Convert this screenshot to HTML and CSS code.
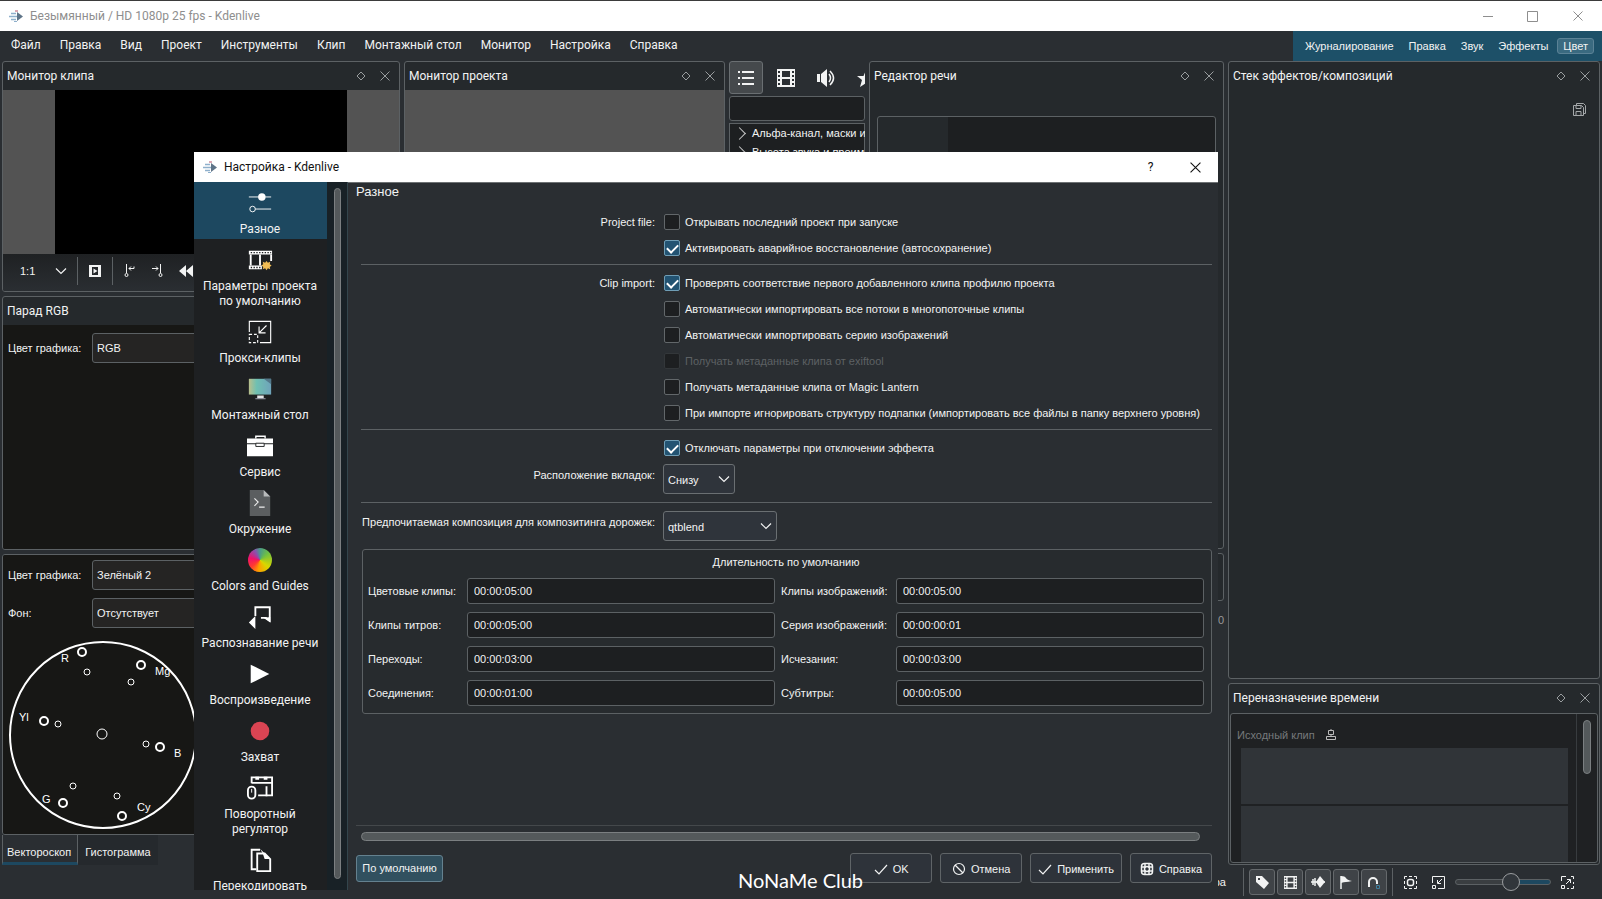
FILE: index.html
```html
<!DOCTYPE html>
<html lang="ru">
<head>
<meta charset="UTF-8">
<title>Безымянный / HD 1080p 25 fps - Kdenlive</title>
<meta name="viewport" content="width=device-width, initial-scale=1">
<link rel="stylesheet" href="styles.css">
</head>
<body>
<!-- shared icons -->
<svg class="defs" width="0" height="0">
  <symbol id="logo" viewBox="0 0 16 16"><path d="M9 4v9l6-4.500z" fill="#5f7488"/><path d="M3 5.500h5M1 8.500h8M3 11.500h5" stroke="#8fb0cc" stroke-width="1.5"/><path d="M7 2h3v2H7z" fill="#dba9b4"/><path d="M6 13h3v1H6z" fill="#8fb0cc"/></symbol>
  <symbol id="float" viewBox="0 0 10 10"><path d="M5 1l4 4-4 4-4-4z" fill="none" stroke="currentColor"/></symbol>
  <symbol id="x" viewBox="0 0 10 10"><path d="M.5.5l9 9M9.5.5l-9 9" fill="none" stroke="currentColor"/></symbol>
  <symbol id="chev" viewBox="0 0 12 8"><path d="M1 1.5l5 5 5-5" fill="none" stroke="currentColor" stroke-width="1.2"/></symbol>
  <symbol id="tick" viewBox="0 0 14 14"><path d="M1 8l4 4 8-9" fill="none" stroke="currentColor" stroke-width="1.2"/></symbol>
  <symbol id="film" viewBox="0 0 18 18"><path fill="currentColor" fill-rule="evenodd" d="M0 0h18v18H0zM5 2v6h8V2zM5 10v6h8v-6zM1 2h2v2H1zM1 6h2v2H1zM1 10h2v2H1zM1 14h2v2H1zM15 2h2v2h-2zM15 6h2v2h-2zM15 10h2v2h-2zM15 14h2v2h-2z"/></symbol>
</svg>

<div class="titlebar">
  <svg class="logo"><use href="#logo"/></svg>
  <span>Безымянный / HD 1080p 25 fps - Kdenlive</span>
  <div class="winbtns">
    <button aria-label="Свернуть"><svg width="10" height="10"><path d="M0 5.5h10" stroke="currentColor"/></svg></button>
    <button aria-label="Развернуть"><svg width="11" height="11"><path d="M.5.5h10v10H.5z" fill="none" stroke="currentColor"/></svg></button>
    <button aria-label="Закрыть"><svg width="10" height="10"><use href="#x"/></svg></button>
  </div>
</div>

<div class="menubar">
  <nav class="menu">
    <button>Файл</button><button>Правка</button><button>Вид</button><button>Проект</button><button>Инструменты</button><button>Клип</button><button>Монтажный стол</button><button>Монитор</button><button>Настройка</button><button>Справка</button>
  </nav>
  <div class="layouts">
    <button>Журналирование</button><button>Правка</button><button>Звук</button><button>Эффекты</button><button class="on">Цвет</button>
  </div>
</div>

<main class="workspace">
  <div class="col">
    <section class="panel clip-monitor">
      <div class="head"><h2>Монитор клипа</h2><svg><use href="#float"/></svg><svg><use href="#x"/></svg></div>
      <div class="video"><div class="frame"></div></div>
      <div class="monitor-tools">
        <span class="zoom">1:1</span>
        <svg class="arrow" width="12" height="8"><use href="#chev"/></svg>
        <i class="vsep"></i>
        <svg width="14" height="14" viewBox="0 0 14 14"><path fill="currentColor" fill-rule="evenodd" d="M1 1h12v12H1zM4 3v8h6V3z"/><path d="M5.500 4.500v5l4-2.500z" fill="currentColor"/></svg>
        <i class="vsep"></i>
        <svg width="14" height="14" viewBox="0 0 14 14" fill="none" stroke="currentColor"><path d="M3.500 0v9M6 4.500h5v-2M8 2.500l-2 2 2 2"/><circle cx="3.500" cy="11" r="1.500"/></svg>
        <svg class="gap" width="14" height="14" viewBox="0 0 14 14" fill="none" stroke="currentColor"><path d="M9.500 0v9M1 4.500h6M5 2.500l2 2-2 2"/><circle cx="9.500" cy="11" r="1.500"/></svg>
        <svg class="gap" width="14" height="14" viewBox="0 0 14 14"><path d="M7 1v12L0 7zM14 1v12L7 7z" fill="currentColor"/></svg>
      </div>
    </section>
    <section class="panel parade">
      <div class="head"><h2>Парад RGB</h2></div>
      <div class="scope">
        <div class="scope-row"><label for="paradeColor">Цвет графика:</label><select id="paradeColor"><option>RGB</option></select></div>
      </div>
    </section>
    <section class="panel vector">
      <div class="scope">
        <div class="scope-row"><label for="vecColor">Цвет графика:</label><select id="vecColor"><option>Зелёный 2</option></select></div>
        <div class="scope-row"><label for="vecBg">Фон:</label><select id="vecBg"><option>Отсутствует</option></select></div>
        <svg class="vectorscope" width="200" height="200" viewBox="0 0 200 200">
          <circle cx="100" cy="101" r="93" stroke-width="2"/>
          <circle cx="99" cy="100" r="5"/>
          <g stroke-width="2"><circle cx="79" cy="18" r="4"/><circle cx="138" cy="31" r="4"/><circle cx="41" cy="87" r="4"/><circle cx="157" cy="113" r="4"/><circle cx="60" cy="169" r="4"/><circle cx="119" cy="182" r="4"/></g>
          <g><circle cx="84" cy="38" r="3"/><circle cx="128" cy="48" r="3"/><circle cx="55" cy="90" r="3"/><circle cx="143" cy="110" r="3"/><circle cx="70" cy="152" r="3"/><circle cx="114" cy="162" r="3"/></g>
          <text x="58" y="28">R</text><text x="152" y="41">Mg</text><text x="16" y="87">Yl</text><text x="171" y="123">B</text><text x="39" y="169">G</text><text x="134" y="177">Cy</text>
        </svg>
      </div>
    </section>
    <div class="tabs"><button class="on">Вектороскоп</button><button>Гистограмма</button></div>
  </div>

  <div class="col">
    <section class="panel project-monitor">
      <div class="head"><h2>Монитор проекта</h2><svg><use href="#float"/></svg><svg><use href="#x"/></svg></div>
      <div class="video"></div>
    </section>
  </div>

  <div class="col effects">
    <div class="kinds">
      <button class="on" aria-label="Все"><svg width="18" height="18" viewBox="0 0 18 18"><path d="M5 3h12M5 9h12M5 15h12M1 3h2M1 9h2M1 15h2" stroke="currentColor" stroke-width="2"/></svg></button>
      <button aria-label="Видео"><svg width="18" height="18"><use href="#film"/></svg></button>
      <button aria-label="Звук"><svg width="18" height="18" viewBox="0 0 18 18"><path d="M0 5h3v8H0zM4 5l6-5v18l-6-5z" fill="currentColor"/><path d="M12 5q3 4 0 8M13 2q7 7 0 14" fill="none" stroke="currentColor" stroke-width="1.500"/></svg></button>
      <button aria-label="Избранное"><svg width="18" height="18" viewBox="0 0 18 18"><path d="M9 1l2.500 6H18l-5 4 2 7-6-4-6 4 2-7-5-4h6.500z" fill="currentColor"/></svg></button>
    </div>
    <input class="search" type="text" aria-label="Поиск">
    <ul class="tree"><li>Альфа-канал, маски и</li><li>Высота звука и преим</li></ul>
  </div>

  <div class="col">
    <section class="panel speech">
      <div class="head"><h2>Редактор речи</h2><svg><use href="#float"/></svg><svg><use href="#x"/></svg></div>
      <div class="speech-text"></div>
    </section>
    <section class="panel mixer"></section>
    <span class="db">0</span>
  </div>

  <div class="col">
    <section class="panel stack">
      <div class="head"><h2>Стек эффектов/композиций</h2><svg><use href="#float"/></svg><svg><use href="#x"/></svg></div>
      <svg class="save" width="13" height="13" viewBox="0 0 13 13" fill="none" stroke="currentColor"><path d="M3.500 2.500v-2h7l2 2v8h-2M.500 2.500h8l2 2v8H.500zM3 2.500v3h5v-3M3 12.500v-4h5v4"/></svg>
    </section>
    <section class="panel remap">
      <div class="head"><h2>Переназначение времени</h2><svg><use href="#float"/></svg><svg><use href="#x"/></svg></div>
      <div class="remap-box">
        <div class="remap-main">
          <div class="remap-label">Исходный клип <svg width="12" height="12" viewBox="0 0 12 12" fill="none" stroke="currentColor"><path d="M3.500 1.500h5v4h-5zM1.500 7.500h9v3h-9zM6 5v3M6 0v1"/></svg></div>
          <div class="block"></div><div class="block"></div>
        </div>
        <div class="vscroll"><div class="thumb"></div></div>
      </div>
    </section>
  </div>
</main>

<footer class="statusbar">
  <span>ра</span>
  <i class="vsep"></i>
  <div class="toggles">
    <button aria-label="Метки"><svg width="16" height="16" viewBox="0 0 16 16"><path fill="currentColor" fill-rule="evenodd" d="M2 2h6l7 7-5 6-8-7zM4 4v2h2V4z"/></svg></button>
    <button aria-label="Миниатюры видео"><svg width="13" height="13"><use href="#film"/></svg></button>
    <button aria-label="Миниатюры звука"><svg width="16" height="16" viewBox="0 0 16 16"><path d="M1 8h14M3 5v6M5 4v8" stroke="currentColor" stroke-width="1.500"/><path d="M10 2l5 6-5 6-4-6z" fill="currentColor"/></svg></button>
    <button aria-label="Маркеры"><svg width="16" height="16" viewBox="0 0 16 16"><path d="M3 2v13" stroke="currentColor" stroke-width="1.500"/><path d="M3 2q4 0 5 2t6 3q-4 1-6 1t-5 1z" fill="currentColor"/></svg></button>
    <button aria-label="Прилипание"><svg width="16" height="16" viewBox="0 0 16 16" fill="none" stroke="currentColor"><path d="M3 13V8a4 4 0 0 1 8 0v2" stroke-width="2"/><path d="M10.500 11.500h3v3h-3z" stroke="#3f7f9f"/></svg></button>
  </div>
  <i class="vsep"></i>
  <svg class="fit" width="13" height="13" viewBox="0 0 13 13" fill="none" stroke="currentColor"><path d="M.500 3V.500H3M10 .500h2.500V3M12.500 10v2.500H10M3 12.500H.500V10M5 .500h3M5 12.500h3M.500 5v3M12.500 5v3"/><rect x="3.500" y="3.500" width="6" height="6" rx="2" stroke-width="1.500"/></svg>
  <svg class="out" width="13" height="13" viewBox="0 0 13 13" fill="none" stroke="currentColor"><path d="M.500 7V.500h12v12H6M.500 9.500h3v3h-3zM10 3L6 7M5.500 4v3.500H9"/></svg>
  <input class="zoombar" type="range" min="0" max="100" value="60" aria-label="Масштаб">
  <svg class="in" width="13" height="13" viewBox="0 0 13 13" fill="none" stroke="currentColor"><path d="M.500 5V.500H5M10 .500h2.500V3M12.500 6v2M12.500 10v2.500H10M6 12.500h2M.500 9.500h3v3h-3zM5 8l4-4M6 3.500h3.500V7"/></svg>
</footer>

<div class="dialog" role="dialog" aria-labelledby="dlgTitle">
  <div class="dialog-title">
    <svg class="logo"><use href="#logo"/></svg>
    <span id="dlgTitle">Настройка - Kdenlive</span>
    <div class="winbtns"><button aria-label="Что это?">?</button><button aria-label="Закрыть"><svg width="11" height="11"><use href="#x"/></svg></button></div>
  </div>
  <div class="dialog-body">
    <nav class="pages">
      <button class="on"><svg viewBox="0 0 28 28"><path d="M2 7.500h24M9 20.500h17" stroke="#fff"/><circle cx="16" cy="7.500" r="4" fill="#fff"/><circle cx="6" cy="20.500" r="3" fill="none" stroke="#fff"/></svg>Разное</button>
      <button><svg viewBox="0 0 28 28"><path d="M2 6h25M2 22h14" stroke="#fff" stroke-width="4"/><path d="M4 6h22M4 22h11" stroke="#1e2022" stroke-width="1.500" stroke-dasharray="1.500 1.500"/><path d="M4 8v12M14 8v12M26 8v7" stroke="#fff" stroke-width="2"/><path d="M21 15l1.500 2 2.500-1-.500 2.500 2 1.500-2 1.500.500 2.500-2.500-1-1.500 2-1.500-2-2.500 1 .500-2.500-2-1.500 2-1.500-.500-2.500 2.500 1z" fill="#f0bc55"/></svg>Параметры проекта<br>по умолчанию</button>
      <button><svg viewBox="0 0 28 28" fill="none" stroke="#fff" stroke-width="1.200"><path d="M2.500 14V2.500h23v23H14M21 7l-8 8M13 8v7h7"/><path d="M2.500 16.500h9v9h-9z" stroke-dasharray="3 2"/></svg>Прокси-клипы</button>
      <button><svg viewBox="0 0 28 28"><defs><linearGradient id="screen"><stop offset="0" stop-color="#b9bf8c"/><stop offset=".35" stop-color="#6fc0b2"/><stop offset="1" stop-color="#6fa3ba"/></linearGradient></defs><path d="M2 3h24v17H2z" fill="url(#screen)"/><path d="M18 3l8 6V3z" fill="#53788a"/><path d="M11 21h7v3h-7z" fill="#e2e5e6"/><path d="M9 24h11v1H9z" fill="#aab"/></svg>Монтажный стол</button>
      <button><svg viewBox="0 0 28 28"><path d="M9.500 6V3.500h10V6" fill="none" stroke="#fff" stroke-width="1.500"/><path d="M0 6h28v5H0zM0 12h28v13H0z" fill="#fff"/><path d="M9.500 11h9v3.500h-9z" fill="#fff" stroke="#1e2022"/></svg>Сервис</button>
      <button><svg viewBox="0 0 28 28"><path d="M3 0h15l7 7v21H3z" fill="#5b5e60"/><path d="M18 0l7 7h-7z" fill="#b8babb"/><path d="M8 9l4 4-4 4M13 18.500h6" fill="none" stroke="#eee" stroke-width="1.200"/></svg>Окружение</button>
      <button><span class="wheel"></span>Colors and Guides</button>
      <button><svg viewBox="0 0 28 28"><path d="M9 13V3.500h15.500V18l-4-3H15" fill="none" stroke="#fff" stroke-width="2"/><path d="M25 14v6l-7-5zM2 20l7-7v14z" fill="#fff"/></svg>Распознавание речи</button>
      <button><svg viewBox="0 0 28 28"><path d="M4 4v20l20-10z" fill="#fff"/></svg>Воспроизведение</button>
      <button><svg viewBox="0 0 28 28"><circle cx="14" cy="14" r="10" fill="#da4453"/></svg>Захват</button>
      <button><svg viewBox="0 0 28 28"><path d="M5 9V2.500h22v19.500H12M5 8.500h22" fill="none" stroke="#fff" stroke-width="2"/><path d="M9 2v3h4V2zM18 2v3h4V2zM20 12h2v11h-2z" fill="#fff"/><rect x="1" y="12.500" width="8" height="13" rx="4" fill="#1e2022" stroke="#fff" stroke-width="2"/><path d="M5 15v4" stroke="#fff"/></svg>Поворотный<br>регулятор</button>
      <button><svg viewBox="0 0 28 28" fill="none" stroke="#fff" stroke-width="2"><path d="M10 24H5V3h9"/><path d="M11 7h8l6 6v13H11z"/><path d="M14 2l5 5 6 6h-6l-2-6z" fill="#fff" stroke="none"/></svg>Перекодировать</button>
    </nav>
    <div class="pages-scroll"><div class="thumb"></div></div>
    <form class="page">
      <h1>Разное</h1>
      <div class="form">
        <span class="lab">Project file:</span>
        <label class="check"><input type="checkbox">Открывать последний проект при запуске</label>
        <label class="check"><input type="checkbox" checked>Активировать аварийное восстановление (автосохранение)</label>
        <hr>
        <span class="lab">Clip import:</span>
        <label class="check"><input type="checkbox" checked>Проверять соответствие первого добавленного клипа профилю проекта</label>
        <label class="check"><input type="checkbox">Автоматически импортировать все потоки в многопоточные клипы</label>
        <label class="check"><input type="checkbox">Автоматически импортировать серию изображений</label>
        <label class="check off"><input type="checkbox" disabled>Получать метаданные клипа от exiftool</label>
        <label class="check"><input type="checkbox">Получать метаданные клипа от Magic Lantern</label>
        <label class="check"><input type="checkbox">При импорте игнорировать структуру подпапки (импортировать все файлы в папку верхнего уровня)</label>
        <hr>
        <label class="check"><input type="checkbox" checked>Отключать параметры при отключении эффекта</label>
        <label class="lab combo-lab" for="tabPos">Расположение вкладок:</label>
        <div class="combo small"><select id="tabPos"><option>Снизу</option></select><svg><use href="#chev"/></svg></div>
        <hr class="wide">
        <label class="lab combo-lab" for="comp">Предпочитаемая композиция для композитинга дорожек:</label>
        <div class="combo"><select id="comp"><option>qtblend</option></select><svg><use href="#chev"/></svg></div>
      </div>
      <fieldset class="durations">
        <div class="caption">Длительность по умолчанию</div>
        <label for="d1">Цветовые клипы:</label><input id="d1" type="text" value="00:00:05:00">
        <label for="d2">Клипы изображений:</label><input id="d2" type="text" value="00:00:05:00">
        <label for="d3">Клипы титров:</label><input id="d3" type="text" value="00:00:05:00">
        <label for="d4">Серия изображений:</label><input id="d4" type="text" value="00:00:00:01">
        <label for="d5">Переходы:</label><input id="d5" type="text" value="00:00:03:00">
        <label for="d6">Исчезания:</label><input id="d6" type="text" value="00:00:03:00">
        <label for="d7">Соединения:</label><input id="d7" type="text" value="00:00:01:00">
        <label for="d8">Субтитры:</label><input id="d8" type="text" value="00:00:05:00">
      </fieldset>
      <div class="hscroll"><div class="thumb"></div></div>
      <div class="actions">
        <button type="button" class="defaults">По умолчанию</button>
        <button type="button"><svg><use href="#tick"/></svg>OK</button>
        <button type="button"><svg viewBox="0 0 14 14" fill="none" stroke="currentColor" stroke-width="1.200"><circle cx="7" cy="7" r="5.500"/><path d="M3 3l8 8"/></svg>Отмена</button>
        <button type="button"><svg><use href="#tick"/></svg>Применить</button>
        <button type="button"><svg viewBox="0 0 14 14" fill="none" stroke="currentColor" stroke-width="1.500"><rect x="1.500" y="1.500" width="11" height="11" rx="3"/><circle cx="7" cy="7" r="2.500"/><path d="M5 1v4H1M9 1v4h4M5 13V9H1M9 13V9h4"/></svg>Справка</button>
      </div>
    </form>
  </div>
</div>
<div class="watermark">NoNaMe Club</div>
</body>
</html>
```
FILE: styles.css
```css
:root{
  --bg:#2a2e32;--head:#25292c;--dark:#1d1f21;--scope:#171715;
  --line:#5c6164;--text:#f2f3f3;--accent:#1d4860;
  --ui:Roboto,"Noto Sans",sans-serif;
  --ctl:"Liberation Sans",Arial,sans-serif;
}
*{box-sizing:border-box;margin:0;padding:0;}
body{height:100vh;overflow:hidden;display:flex;flex-direction:column;background:var(--bg);color:var(--text);font:12px/16px var(--ui);border-top:1px solid #3b3b3b;}
button,input,select{font:inherit;color:inherit;background:none;border:none;}
svg{display:block;flex:none;}
.defs{position:absolute;}
h1,h2{font-weight:400;}
.logo{width:16px;height:16px;}

/* window frame */
.titlebar{height:30px;flex:none;background:#fff;color:#8e8e8e;display:flex;align-items:center;gap:6px;padding-left:8px;}
.winbtns{margin-left:auto;display:flex;}
.winbtns button{width:45px;height:30px;display:flex;align-items:center;justify-content:center;}
.titlebar .winbtns{padding-right:2px;}
.menubar{height:30px;flex:none;display:flex;justify-content:space-between;}
.menu{display:flex;gap:19px;padding:0 0 2px 11px;align-items:center;}
.layouts{display:flex;gap:3px;align-items:center;background:#1d5068;padding:0 8px 0 6px;font:11px/14px var(--ctl);}
.layouts button{padding:0 5px;border:1px solid transparent;border-radius:3px;}
.layouts .on{background:#3a6a80;border-color:#5b8296;}

/* docks */
.workspace{flex:1;min-height:0;display:grid;grid-template-columns:398fr 321fr 136fr 355fr 372fr;gap:4px;padding:0 2px;}
.col{display:flex;flex-direction:column;gap:4px;min-width:0;min-height:0;}
.panel{border:1px solid var(--line);border-radius:3px;background:var(--head);overflow:hidden;display:flex;flex-direction:column;}
.head{height:28px;flex:none;display:flex;align-items:center;gap:14px;padding:0 9px 0 4px;color:#999d9f;}
.head h2{font-size:12px;color:var(--text);margin-right:auto;white-space:nowrap;}
.head svg{width:10px;height:10px;}
.video{flex:1;background:#535353;display:flex;justify-content:center;}
.frame{width:292px;background:#000;}
.clip-monitor,.project-monitor{height:231px;}
.monitor-tools{height:37px;background:linear-gradient(#1f2123,var(--bg));display:flex;align-items:center;gap:10px;padding:0 0 4px 17px;font:11px/14px var(--ctl);white-space:nowrap;}
.zoom{margin-right:10px;}
.gap{margin-left:4px;}
.vsep{width:1px;height:28px;background:var(--line);flex:none;}
.parade{height:254px;}
.vector{flex:1;}
.scope{flex:1;background:var(--scope);padding:5px 0 0 5px;display:flex;flex-direction:column;gap:8px;font:11px/14px var(--ctl);}
.parade .scope{padding-top:8px;}
.scope-row{display:flex;align-items:center;}
.scope-row label{width:84px;}
.scope-row select{flex:1;height:30px;appearance:none;background:#252423;border:1px solid var(--line);border-radius:3px;padding-left:4px;}
.vectorscope{margin:-2px 0 0 -5px;fill:none;stroke:#fff;}
.vectorscope text{fill:#fff;stroke:none;}
.tabs{display:flex;height:30px;flex:none;margin-top:-4px;font:11px/14px var(--ctl);}
.tabs button{padding:4px 7px 0;background:#25292d;}
.tabs .on{background:var(--bg);border:1px solid var(--line);border-top:none;border-bottom:3px solid var(--accent);padding:6px 6px 0 4px;}

.effects{overflow:hidden;gap:2px;font:11px/14px var(--ctl);}
.kinds{display:flex;gap:6px;}
.kinds button{width:34px;height:33px;flex:none;display:flex;align-items:center;justify-content:center;border-radius:3px;}
.kinds .on{background:#45494c;border:1px solid #6a6f72;}
.search{height:25px;flex:none;background:var(--dark);border:1px solid var(--line);border-radius:3px;}
.tree{list-style:none;flex:1;background:var(--dark);border:1px solid var(--line);padding-left:5px;white-space:nowrap;}
.tree li{height:19px;line-height:19px;display:flex;align-items:center;gap:8px;}
.tree li::before{content:"";width:8px;height:8px;flex:none;border:solid #ccc;border-width:1px 1px 0 0;transform:rotate(45deg);}
.speech{height:488px;}
.speech-text{flex:1;margin:26px 7px 7px;border:1px solid var(--line);border-radius:3px;background:linear-gradient(90deg,#25292c 70px,var(--dark) 70px);}
.mixer{height:48px;}
.db{align-self:flex-end;font:11px/14px var(--ctl);color:#999;margin-top:8px;}
.stack{flex:1;}
.save{margin:13px 13px 0 auto;color:#a5a8aa;}
.remap{height:182px;}
.remap-box{flex:1;margin:1px;border:1px solid var(--line);border-radius:3px;background:#1f2123;display:flex;}
.remap-main{flex:1;padding:11px 8px 0 10px;display:flex;flex-direction:column;gap:2px;}
.remap-label{display:flex;align-items:center;gap:10px;height:20px;margin:0 0 1px -4px;color:#76797b;font:11px/14px var(--ctl);}
.remap-label svg{color:#bbb;}
.block{flex:1;background:#303438;}
.vscroll{width:21px;border-left:1px solid #383c3f;padding:6px;}
.thumb{background:#54595b;border:1px solid #7b7f81;border-radius:5px;}
.vscroll .thumb{width:8px;height:54px;}

.statusbar{height:34px;flex:none;display:flex;align-items:center;justify-content:flex-end;padding-right:28px;font:11px/14px var(--ctl);}
.statusbar>.vsep{margin:0 5px;}
.statusbar>span{margin-right:12px;}
.toggles{display:flex;gap:2px;}
.toggles button{width:26px;height:26px;display:flex;align-items:center;justify-content:center;background:#3f4347;border:1px solid #65696c;border-radius:3px;}
.fit{margin-left:6px;}
.out{margin-left:15px;}
.zoombar{appearance:none;width:96px;height:20px;margin:0 10px;}
.zoombar::-webkit-slider-runnable-track{height:6px;border:1px solid #5c6164;border-radius:3px;background:linear-gradient(90deg,#3a3e41 60%,var(--accent) 60%);}
.zoombar::-webkit-slider-thumb{appearance:none;width:18px;height:18px;margin-top:-7px;border-radius:50%;background:#31363b;border:1px solid #9a9d9f;}

/* settings dialog floats above the main window */
.dialog{position:absolute;left:194px;right:384px;top:152px;bottom:9px;display:flex;flex-direction:column;background:var(--bg);}
.dialog-title{height:30px;flex:none;background:#fff;color:#111;display:flex;align-items:center;gap:6px;padding-left:8px;}
.dialog-body{flex:1;min-height:0;display:flex;}
.pages{width:133px;flex:none;background:#1e2022;overflow:hidden;line-height:15px;}
.pages button{width:100%;display:flex;flex-direction:column;align-items:center;padding:7px 1px 2px 0;text-align:center;}
.pages .on{background:var(--accent);}
.pages svg,.wheel{width:28px;height:28px;margin-bottom:5px;}
.pages svg{padding:1px;}
.wheel{border:2px solid transparent;border-radius:50%;background:conic-gradient(#4a9a8a,#6fc043 50deg,#d8d800 130deg,#ff9d00 190deg,#ff3b2f 230deg,#f0106a 280deg,#8b4fae 330deg,#4a9a8a) padding-box;}
.pages-scroll{width:21px;flex:none;background:#182126;padding:6px 6px 11px 7px;border-right:1px solid #33454c;}
.pages-scroll .thumb{height:100%;}
.page{flex:1;min-width:0;display:flex;flex-direction:column;padding:0 6px 7px 8px;border-top:1px solid #6d7173;font:11px/14px var(--ctl);}
.page h1{height:25px;font-size:13px;line-height:17px;}
.form{display:grid;grid-template-columns:294px minmax(0,1fr);column-gap:8px;margin-left:5px;white-space:nowrap;}
.lab{grid-column:1;text-align:right;line-height:28px;height:26px;}
.combo-lab{line-height:22px;}
.check{grid-column:2;height:26px;display:flex;align-items:center;gap:5px;padding:1px 0 0 1px;}
.check input{appearance:none;width:16px;height:16px;flex:none;background:var(--dark);border:1px solid #62676a;border-radius:2px;display:flex;justify-content:center;}
.check input:checked{background:#225372;border-color:#6f9db5;}
.check input:checked::after{content:"";width:5px;height:9px;margin-top:1px;border:solid #fff;border-width:0 2px 2px 0;transform:rotate(45deg);}
.off{color:#5d6164;}
.off input{border-color:#33373a;}
hr{grid-column:1/-1;border:none;height:1px;background:var(--line);margin:4px 0;}
.wide{margin:8px 0;}
.combo{grid-column:2;position:relative;width:114px;height:30px;}
.small{width:72px;margin-top:4px;}
.combo-lab:has(+.small){margin-top:4px;}
.combo select{appearance:none;width:100%;height:100%;background:#2f343b;border:1px solid #6a6f72;border-radius:3px;padding:2px 0 0 4px;}
.combo svg{position:absolute;right:5px;top:11px;width:12px;height:8px;pointer-events:none;}
.durations{margin:8px 0 0 6px;border:1px solid var(--line);border-radius:3px;background:#272b2e;display:grid;grid-template-columns:93px 1fr 109px 1fr;gap:8px 6px;align-items:center;padding:4px 7px 7px 5px;white-space:nowrap;}
.caption{grid-column:1/-1;text-align:center;line-height:16px;}
.durations input{width:100%;height:26px;background:var(--dark);border:1px solid var(--line);border-radius:3px;padding-left:6px;}
.hscroll{margin-top:auto;border-top:1px solid #44484b;padding:6px 12px 6px 5px;}
.hscroll .thumb{height:9px;}
.actions{display:flex;gap:8px;align-items:center;margin-top:6px;}
.actions button{min-width:82px;height:30px;padding:1px 7px 0;display:flex;align-items:center;justify-content:center;gap:5px;background:#2e333a;border:1px solid #5f6467;border-radius:3px;white-space:nowrap;}
.actions svg{width:14px;height:14px;}
.actions .defaults{height:27px;min-width:87px;padding:0 5px;margin-right:auto;background:#31505f;border-color:#64818f;}
.watermark{position:absolute;left:738px;bottom:6px;font:20px/26px Lato,sans-serif;color:#fff;pointer-events:none;}
```
